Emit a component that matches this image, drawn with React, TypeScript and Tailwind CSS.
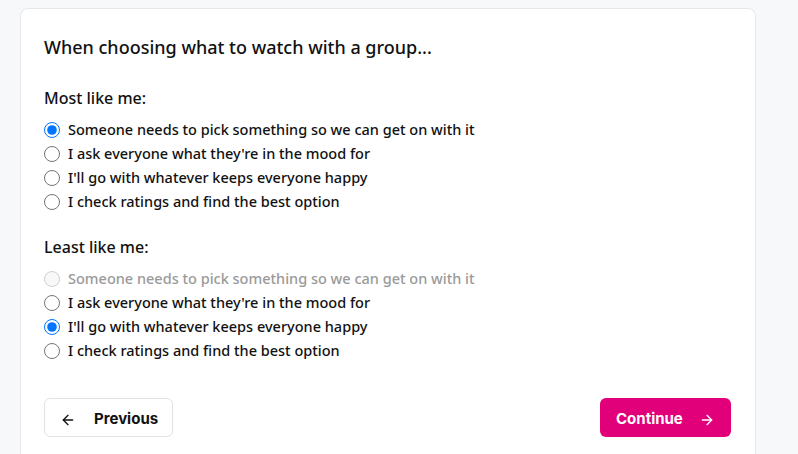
import React, { useState } from "react";

const OPTIONS = [
  "Someone needs to pick something so we can get on with it",
  "I ask everyone what they're in the mood for",
  "I'll go with whatever keeps everyone happy",
  "I check ratings and find the best option",
];

const ArrowLeft = () => (
  <svg width="16" height="16" viewBox="0 0 24 24" fill="none" stroke="currentColor" strokeWidth="2" strokeLinecap="round" strokeLinejoin="round">
    <path d="M19 12H5" />
    <path d="M12 19l-7-7 7-7" />
  </svg>
);

const ArrowRight = () => (
  <svg width="16" height="16" viewBox="0 0 24 24" fill="none" stroke="currentColor" strokeWidth="2" strokeLinecap="round" strokeLinejoin="round">
    <path d="M5 12h14" />
    <path d="M12 5l7 7-7 7" />
  </svg>
);

type GroupProps = {
  name: string;
  label: string;
  value: number;
  disabledIndex: number;
  onChange: (i: number) => void;
};

const Group: React.FC<GroupProps> = ({ name, label, value, disabledIndex, onChange }) => (
  <div>
    <p className="text-[16px] leading-6 font-medium text-[#111]">{label}</p>
    <div className="mt-2 flex flex-col">
      {OPTIONS.map((opt, i) => {
        const disabled = i === disabledIndex;
        return (
          <label
            key={opt}
            className={`flex items-center gap-2 h-6 text-[14.5px] font-medium ${disabled ? "text-[#9a9a9a]" : "text-[#111]"}`}
          >
            <input
              type="radio"
              name={name}
              className="w-4 h-4 m-0"
              checked={value === i}
              disabled={disabled}
              onChange={() => onChange(i)}
            />
            {opt}
          </label>
        );
      })}
    </div>
  </div>
);

export default function App() {
  const [most, setMost] = useState(0);
  const [least, setLeast] = useState(2);

  return (
    <div className="min-h-screen bg-[#f7f8fa] px-5 pt-2" style={{ fontFamily: '"Noto Sans", "Open Sans", sans-serif' }}>
      <div className="w-[736px] bg-white border border-[#e5e7eb] rounded-lg pl-[23px] pr-6 pt-6 pb-8">
        <h1 className="text-[18px] leading-7 font-medium text-[#111]">
          When choosing what to watch with a group...
        </h1>
        <div className="mt-[25px]">
          <Group name="most" label="Most like me:" value={most} disabledIndex={-1} onChange={setMost} />
        </div>
        <div className="mt-[21px]">
          <Group name="least" label="Least like me:" value={least} disabledIndex={most} onChange={setLeast} />
        </div>
        <div className="mt-[35px] flex items-center justify-between" style={{ fontFamily: "Inter, sans-serif" }}>
          <button className="h-[39px] w-[129px] flex items-center gap-[18px] pl-[15px] pt-1 border border-[#e2e2e2] rounded-md bg-white text-[15px] font-bold text-[#111]">
            <ArrowLeft />
            Previous
          </button>
          <button className="h-[39px] w-[131px] flex items-center gap-4 pl-4 pt-1 rounded-md bg-[#e2007a] text-[15px] font-bold text-white">
            Continue
            <ArrowRight />
          </button>
        </div>
      </div>
    </div>
  );
}
